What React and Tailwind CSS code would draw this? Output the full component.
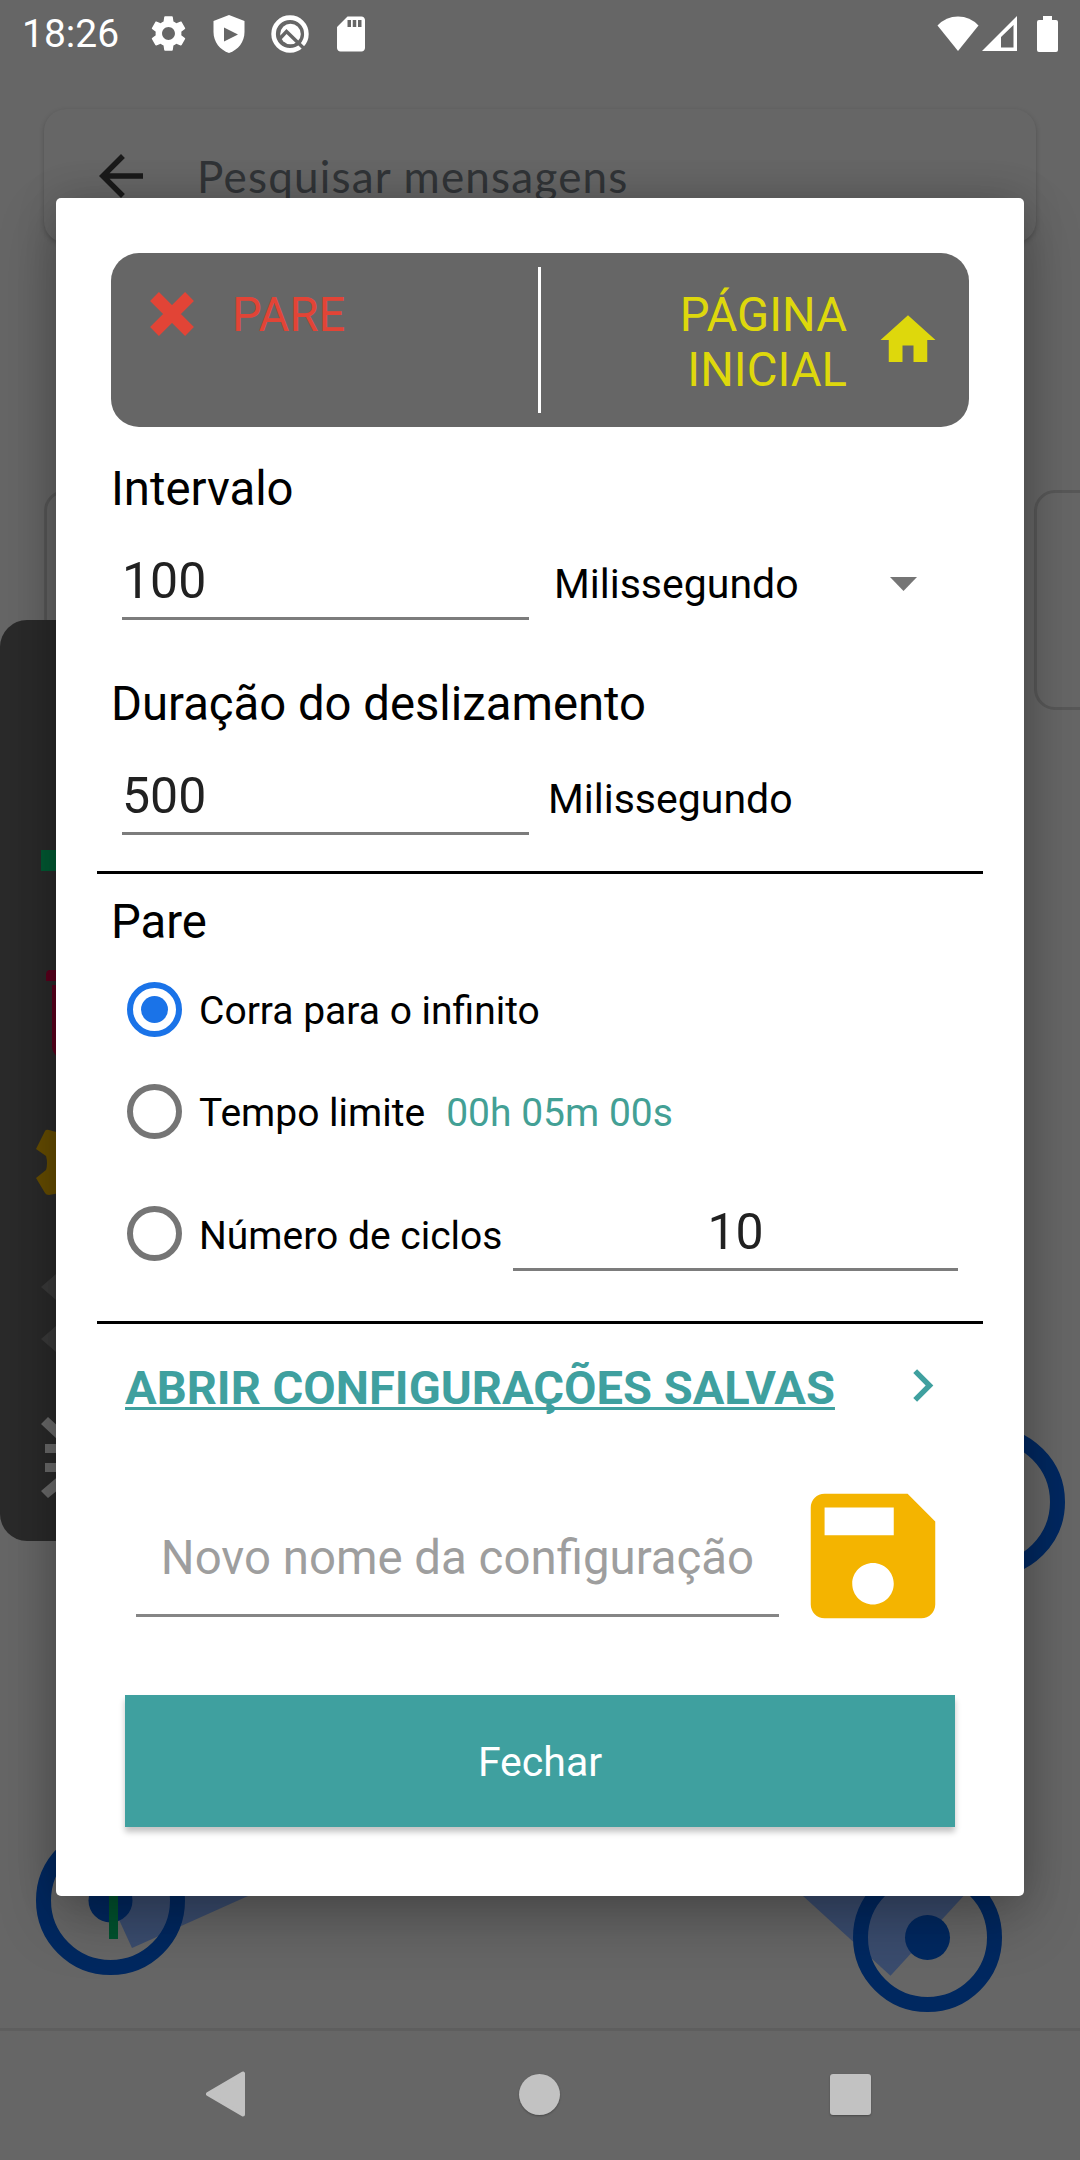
import React, { useState } from 'react';

const ICONS = {
  settings: 'M19.14 12.94c.04-.3.06-.61.06-.94 0-.32-.02-.64-.07-.94l2.03-1.58c.18-.14.23-.41.12-.61l-1.92-3.32c-.12-.22-.37-.29-.59-.22l-2.39.96c-.5-.38-1.03-.7-1.62-.94l-.36-2.54c-.04-.24-.24-.41-.48-.41h-3.84c-.24 0-.43.17-.47.41l-.36 2.54c-.59.24-1.13.57-1.62.94l-2.39-.96c-.22-.08-.47 0-.59.22L2.74 8.87c-.12.21-.08.47.12.61l2.03 1.58c-.05.3-.09.63-.09.94s.02.64.07.94l-2.03 1.58c-.18.14-.23.41-.12.61l1.92 3.32c.12.22.37.29.59.22l2.39-.96c.5.38 1.03.7 1.62.94l.36 2.54c.05.24.24.41.48.41h3.84c.24 0 .44-.17.47-.41l.36-2.54c.59-.24 1.13-.56 1.62-.94l2.39.96c.22.08.47 0 .59-.22l1.92-3.32c.12-.22.07-.47-.12-.61l-2.01-1.58zM12 15.6c-1.98 0-3.6-1.62-3.6-3.6s1.62-3.6 3.6-3.6 3.6 1.62 3.6 3.6-1.62 3.6-3.6 3.6z',
  sdCard: 'M18 2h-8L4.02 8 4 20c0 1.1.9 2 2 2h12c1.1 0 2-.9 2-2V4c0-1.1-.9-2-2-2zm-6 6h-2V4h2v4zm3 0h-2V4h2v4zm3 0h-2V4h2v4z',
  back: 'M20 11H7.83l5.59-5.59L12 4l-8 8 8 8 1.41-1.41L7.83 13H20v-2z',
  home: 'M10 20v-6h4v6h5v-8h3L12 3 2 12h3v8z',
  chevron: 'M10 6L8.59 7.41 13.17 12l-4.58 4.59L10 18l6-6z',
  save: 'M17 3H5c-1.11 0-2 .9-2 2v14c0 1.1.89 2 2 2h14c1.1 0 2-.9 2-2V7l-4-4zm-5 16c-1.66 0-3-1.34-3-3s1.34-3 3-3 3 1.34 3 3-1.34 3-3 3zm3-10H5V5h10v4z',
};

function Icon({ name, className }) {
  return (
    <svg viewBox="0 0 24 24" className={className} fill="currentColor">
      <path d={ICONS[name]} />
    </svg>
  );
}

function StatusBar() {
  return (
    <div className="flex h-[67px] items-center pl-[22px] pr-[22px] text-white">
      <span className="w-[98px] pt-[2px] text-[39px] leading-none">18:26</span>
      <Icon name="settings" className="ml-[27px] size-[43px]" />
      <svg viewBox="0 0 32 38" className="ml-[23px] h-[38px] w-8" fill="currentColor">
        <path fillRule="evenodd" d="M16 0L31.5 6V17C31.5 27 25 35 16 38C7 35 .5 27 .5 17V6ZM11 12.5V26.5L25 19.5Z" />
      </svg>
      <svg viewBox="0 0 38 38" className="ml-[26px] size-[38px]" fill="none">
        <circle cx="19" cy="19" r="16.400" stroke="currentColor" strokeWidth="4.600" />
        <circle cx="19.500" cy="19" r="10.300" fill="currentColor" />
        <path d="M9 23.500L15.500 16.500L33 33.500" stroke="#666666" strokeWidth="3.400" />
      </svg>
      <Icon name="sdCard" className="ml-[21px] size-[42px]" />
      <svg viewBox="0 0 42 35" className="ml-auto h-[35px] w-[42px]" fill="currentColor">
        <path d="M21 35L.5 9.5Q9 .5 21 .5T41.500 9.500Z" />
      </svg>
      <svg viewBox="0 0 35 35" className="ml-[3px] size-[35px]" fill="currentColor">
        <path fillRule="evenodd" d="M0 35L35 0V35ZM19 21V31.500H31.500V9Z" />
      </svg>
      <svg viewBox="0 0 21 36" className="ml-5 h-9 w-[21px]" fill="currentColor">
        <path d="M6 0H15V4H19Q21 4 21 6V34Q21 36 19 36H2Q0 36 0 34V6Q0 4 2 4H6Z" />
      </svg>
    </div>
  );
}

function SearchBar() {
  return (
    <div className="mx-11 mt-[42px] flex h-[134px] items-center rounded-[22px] bg-[#666666] pl-11 shadow-[0_2px_5px_0_rgba(0,0,0,0.22)]">
      <Icon name="back" className="size-[66px] text-[#1a1a1a]" />
      <span className="ml-[43px] font-[Lato,sans-serif] text-[44px] tracking-[1.2px] text-[#313437]">Pesquisar mensagens</span>
    </div>
  );
}

// Recorded tap and swipe points lying over the app
function GestureMarks() {
  return (
    <svg viewBox="0 0 1080 2160" className="absolute inset-0 h-full w-full" fill="none">
      <path d="M110 1900L132 1948L248 1896L230 1850Z" fill="#3a4c6e" />
      <path d="M803 1896L890.5 1975.700L963.500 1896L900 1840Z" fill="#3a4c6e" />
      <g stroke="#002860" strokeWidth="15">
        <circle cx="990" cy="1502" r="67.500" />
        <circle cx="110.500" cy="1900.500" r="67" />
        <circle cx="927.500" cy="1937.500" r="67" />
      </g>
      <circle cx="110.500" cy="1900.500" r="22" fill="#002860" />
      <circle cx="927.500" cy="1937.500" r="22.500" fill="#002860" />
      <path d="M109 1860H118V1939H109Z" fill="#00532f" />
    </svg>
  );
}

function FloatingToolbar() {
  return (
    <svg viewBox="0 0 120 921" className="absolute left-0 top-[620px] h-[921px] w-[120px]">
      <rect width="120" height="921" rx="27" fill="#2a2a2a" />
      <path d="M41 230H100V251H41Z" fill="#005a33" />
      <path d="M46 355Q46 350 50 350H90V361H46ZM52 365H90V437H58Q52 433 52 426Z" fill="#5c001d" />
      <path d="M36 529L45 511Q46 509 49 510L60 513V573L49 575Q46 575 45 573L36 558L46 550Q48 543 46 536Z" fill="#664d00" />
      <path d="M41 667L70 642V692ZM41 719L70 694V744Z" fill="#3a3a3a" />
      <path d="M41 804L48 797L75 822V836ZM45 824H75V833H45ZM45 843H75V852H45ZM41 871L75 842V856L48 878Z" fill="#6b6b6b" />
    </svg>
  );
}

function Radio({ checked, onChange, className = '' }) {
  return (
    <button
      onClick={onChange}
      className={`flex size-[55px] shrink-0 items-center justify-center rounded-full border-[6px] ${checked ? 'border-[#1a73e8]' : 'border-[#757575]'} ${className}`}
    >
      {checked && <span className="size-[27px] rounded-full bg-[#1a73e8]" />}
    </button>
  );
}

function Divider({ className }) {
  return <div className={`-mx-[14px] h-[3px] shrink-0 bg-black ${className}`} />;
}

function NumberField({ value, onChange, className }) {
  return (
    <input
      value={value}
      onChange={(e) => onChange(e.target.value)}
      className={`h-[68px] border-b-[3px] border-[#7c7c7c] pb-[7px] text-[50px] leading-[58px] text-[#212121] outline-none ${className}`}
    />
  );
}

function SettingsDialog() {
  const [interval, setInterval] = useState('100');
  const [duration, setDuration] = useState('500');
  const [cycles, setCycles] = useState('10');
  const [stopMode, setStopMode] = useState('infinite');
  const [name, setName] = useState('');

  return (
    <div className="flex w-[968px] flex-col rounded-[5px] bg-white px-[55px] pb-[69px] pt-[55px] text-[47.25px] leading-[55px] text-black shadow-[0_24px_60px_rgba(0,0,0,0.24),0_0_40px_rgba(0,0,0,0.16)]">
      <div className="flex h-[174px] rounded-[28px] bg-[#666666] py-[14px]">
        <div className="flex w-[427px] items-start pl-[39px] pt-[21px] text-[#e24436]">
          <svg viewBox="0 0 44 44" className="mt-1 size-11" stroke="currentColor" strokeWidth="12.500">
            <path d="M4.500 4.500L39.500 39.500M39.500 4.500L4.500 39.500" />
          </svg>
          <span className="ml-[38px]">PARE</span>
        </div>
        <div className="w-[3px] bg-white" />
        <div className="flex flex-1 justify-end pr-[28px] pt-[21px] text-[#ded80c]">
          <span className="w-[200px] text-right">PÁGINA INICIAL</span>
          <Icon name="home" className="ml-[28px] mt-[19px] size-[66px]" />
        </div>
      </div>

      <h2 className="mt-[35px]">Intervalo</h2>
      <div className="ml-[11px] mt-[35px] flex items-baseline">
        <NumberField value={interval} onChange={setInterval} className="w-[407px]" />
        <span className="ml-[25px] text-[41px] leading-[49px]">Milissegundo</span>
        <svg viewBox="0 0 27 14" className="ml-[91px] mt-[25px] h-[14px] w-[27px] self-start" fill="#757575">
          <path d="M0 0H27L13.500 14Z" />
        </svg>
      </div>

      <h2 className="mt-[57px]">Duração do deslizamento</h2>
      <div className="ml-[11px] mt-[35px] flex items-baseline">
        <NumberField value={duration} onChange={setDuration} className="w-[407px]" />
        <span className="ml-[19px] text-[41px] leading-[49px]">Milissegundo</span>
      </div>

      <Divider className="mt-9" />
      <h2 className="mt-[21px]">Pare</h2>

      <div className="ml-4 mt-[31px] flex h-14 items-center">
        <Radio checked={stopMode === 'infinite'} onChange={() => setStopMode('infinite')} />
        <span className="ml-[17px] pt-1 text-[39px] leading-[46px]">Corra para o infinito</span>
      </div>
      <div className="ml-4 mt-[46px] flex h-14 items-center">
        <Radio checked={stopMode === 'time'} onChange={() => setStopMode('time')} />
        <span className="ml-[17px] pt-1 text-[39px] leading-[46px]">Tempo limite</span>
        <span className="ml-[21px] pt-1 text-[39px] leading-[46px] text-[#43a095]">00h 05m 00s</span>
      </div>
      <div className="ml-4 mt-16 flex items-start">
        <Radio checked={stopMode === 'cycles'} onChange={() => setStopMode('cycles')} className="mt-[3px]" />
        <span className="ml-[17px] mt-[10px] w-[314px] whitespace-nowrap text-[39px] leading-[46px]">Número de ciclos</span>
        <NumberField value={cycles} onChange={setCycles} className="w-[445px] text-center" />
      </div>

      <Divider className="mt-[50px]" />
      <div className="ml-[14px] mt-[36px] flex h-[55px] items-center text-[#3fa09f]">
        <a className="whitespace-nowrap text-[47.1px] font-bold underline decoration-[3px] underline-offset-[3px] [text-decoration-skip-ink:none]">ABRIR CONFIGURAÇÕES SALVAS</a>
        <Icon name="chevron" className="-mt-1 ml-[55px] size-[65px]" />
      </div>

      <div className="ml-[25px] mt-[58px] flex h-[166px]">
        <input
          value={name}
          onChange={(e) => setName(e.target.value)}
          placeholder="Novo nome da configuração"
          className="mt-[57px] h-[87px] w-[643px] border-b-[3px] border-[#858585] pb-[28px] text-center text-[47.4px] leading-[55px] outline-none placeholder:text-[#9e9e9e]"
        />
        <Icon name="save" className="ml-[10.500px] size-[166px] text-[#f4b400]" />
      </div>

      <button className="mx-[14px] mt-14 h-[132px] bg-[#3fa09f] pt-[3px] text-[41px] text-white shadow-[0_5px_6px_rgba(0,0,0,0.24)]">Fechar</button>
    </div>
  );
}

function NavBar() {
  return (
    <div className="mt-auto flex h-[132px] items-center border-t-[3px] border-[#5e5e5e] bg-[#666666] pb-[3px] pl-[206px] text-[#c2c2c2]">
      <svg viewBox="0 0 39 46" className="h-[46px] w-[39px]" fill="currentColor" stroke="currentColor" strokeWidth="4" strokeLinejoin="round">
        <path d="M2 23L37 2.500V43.500Z" />
      </svg>
      <div className="ml-[274px] size-[41px] rounded-full bg-current shadow-[0_1px_2px_rgba(0,0,0,0.3)]" />
      <div className="ml-[270px] size-[41px] rounded-[3px] bg-current shadow-[0_1px_2px_rgba(0,0,0,0.3)]" />
    </div>
  );
}

export default function App() {
  return (
    <div className="relative flex h-[2160px] w-[1080px] flex-col overflow-hidden bg-[#666666] font-[Roboto,sans-serif]">
      <StatusBar />
      <SearchBar />
      <div className="-mr-[200px] ml-11 mt-[247px] flex gap-[22px]">
        <div className="h-[220px] w-[968px] shrink-0 rounded-[21px] border-[3px] border-[#585858]" />
        <div className="h-[220px] w-[200px] shrink-0 rounded-[21px] border-[3px] border-[#585858]" />
      </div>
      <NavBar />
      <GestureMarks />
      <FloatingToolbar />
      <div className="absolute inset-x-0 top-[198px] flex justify-center">
        <SettingsDialog />
      </div>
    </div>
  );
}
